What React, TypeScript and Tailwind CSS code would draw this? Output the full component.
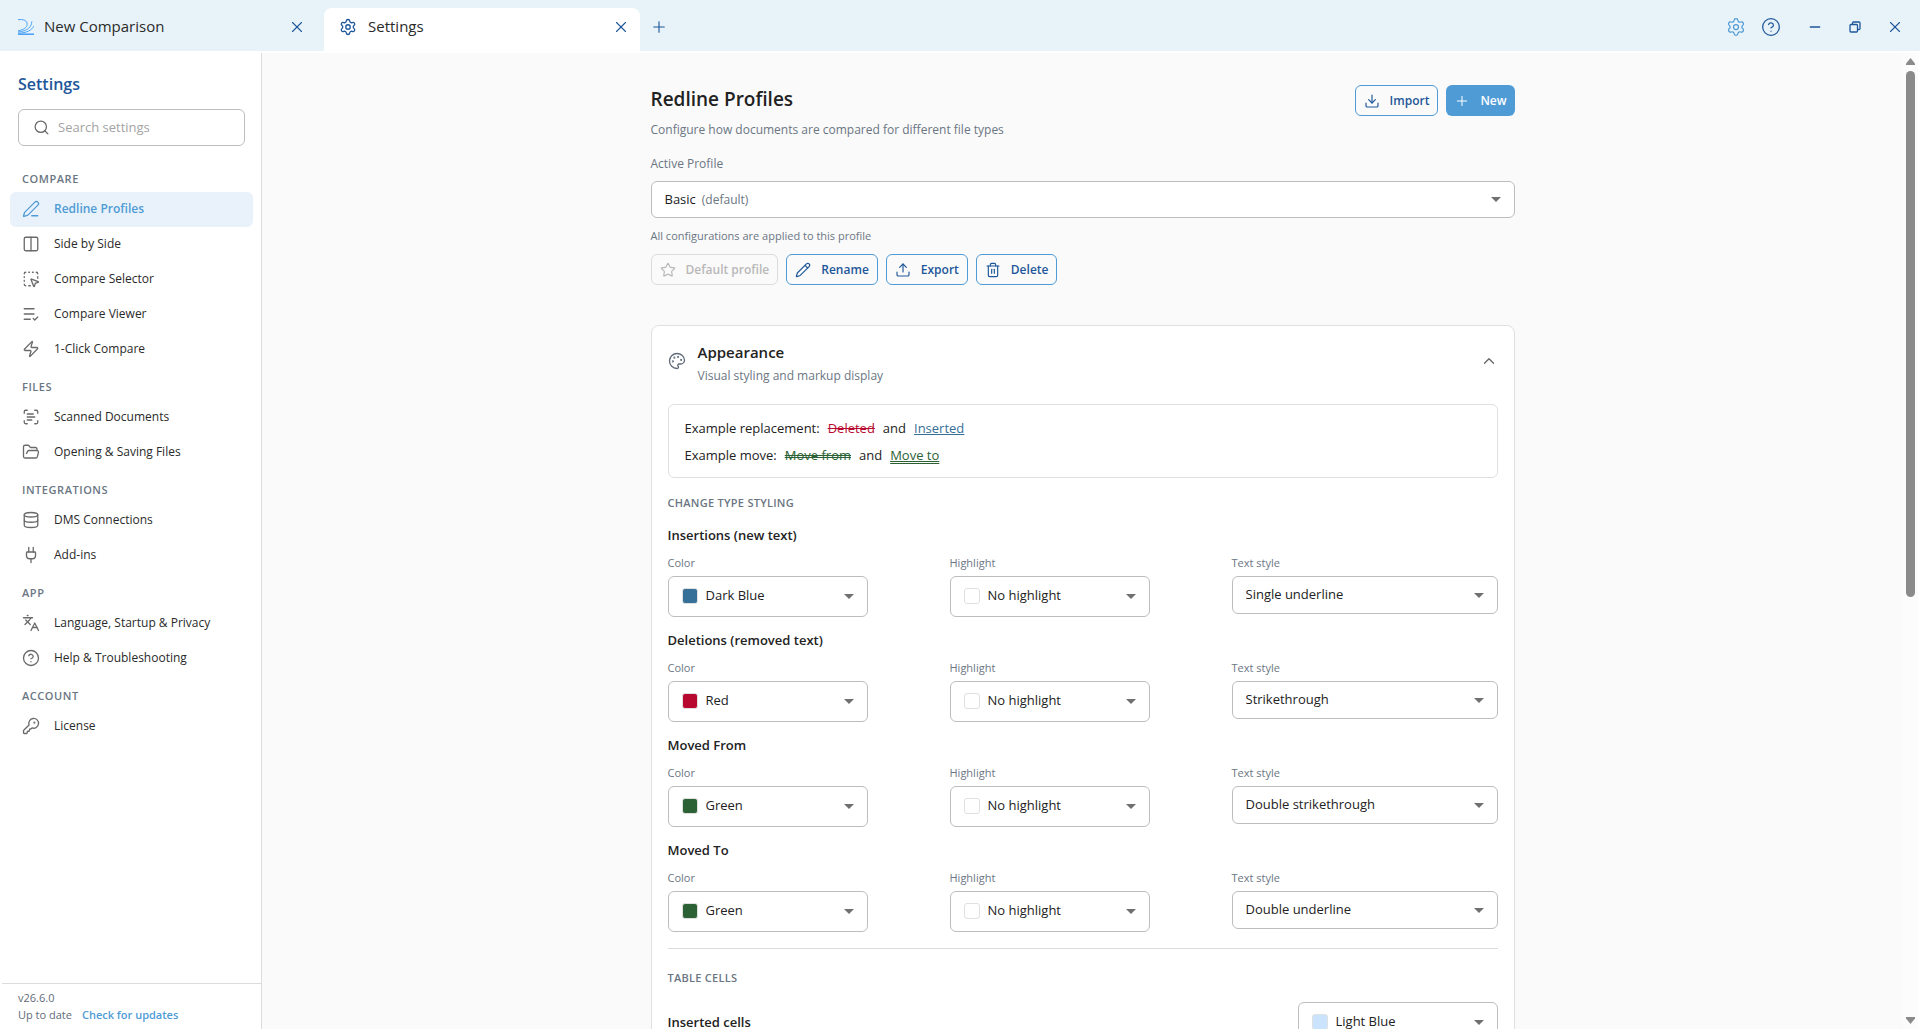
import React from 'react';
import {
  ChevronUp,
  CircleHelp,
  Columns2,
  Database,
  Download,
  FolderOpen,
  KeyRound,
  Languages,
  ListCheck,
  Minus,
  Palette,
  Pencil,
  PenLine,
  Plug,
  Plus,
  ScanText,
  Search,
  Settings,
  SquareDashedMousePointer,
  Star,
  Trash2,
  Upload,
  X,
  Zap,
  type LucideIcon,
} from 'lucide-react';

type NavItem = {
  label: string;
  icon: LucideIcon;
  active?: boolean;
};

const navGroups: { title: string; items: NavItem[] }[] = [
  {
    title: 'COMPARE',
    items: [
      { label: 'Redline Profiles', icon: PenLine, active: true },
      { label: 'Side by Side', icon: Columns2 },
      { label: 'Compare Selector', icon: SquareDashedMousePointer },
      { label: 'Compare Viewer', icon: ListCheck },
      { label: '1-Click Compare', icon: Zap },
    ],
  },
  {
    title: 'FILES',
    items: [
      { label: 'Scanned Documents', icon: ScanText },
      { label: 'Opening & Saving Files', icon: FolderOpen },
    ],
  },
  {
    title: 'INTEGRATIONS',
    items: [
      { label: 'DMS Connections', icon: Database },
      { label: 'Add-ins', icon: Plug },
    ],
  },
  {
    title: 'APP',
    items: [
      { label: 'Language, Startup & Privacy', icon: Languages },
      { label: 'Help & Troubleshooting', icon: CircleHelp },
    ],
  },
  {
    title: 'ACCOUNT',
    items: [{ label: 'License', icon: KeyRound }],
  },
];

type ChangeType = {
  id: string;
  title: string;
  color: string;
  swatch: string;
  textStyle: string;
};

const changeTypes: ChangeType[] = [
  { id: 'insertions', title: 'Insertions (new text)', color: 'Dark Blue', swatch: 'bg-[#366f98]', textStyle: 'Single underline' },
  { id: 'deletions', title: 'Deletions (removed text)', color: 'Red', swatch: 'bg-[#b8082f]', textStyle: 'Strikethrough' },
  { id: 'moved-from', title: 'Moved From', color: 'Green', swatch: 'bg-[#2c6135]', textStyle: 'Double strikethrough' },
  { id: 'moved-to', title: 'Moved To', color: 'Green', swatch: 'bg-[#2c6135]', textStyle: 'Double underline' },
];

const colors = ['Dark Blue', 'Light Blue', 'Red', 'Green'];
const highlights = ['No highlight', 'Yellow', 'Light Blue'];
const textStyles = ['Single underline', 'Double underline', 'Strikethrough', 'Double strikethrough'];

const Caret: React.FC = () => (
  <svg className="pointer-events-none h-[5px] w-[10px] shrink-0 text-[#707070]" viewBox="0 0 10 5" fill="currentColor" aria-hidden="true">
    <path d="M0 0h10L5 5z" />
  </svg>
);

const BrandMark: React.FC = () => (
  <svg className="size-4 shrink-0" viewBox="0 0 16 16" fill="none" stroke="#4da3f7" strokeWidth="1" aria-hidden="true">
    <path d="M0 .6h3.5C7 .6 9.200 2.300 9.200 5.200S6 10.800 0 11.800" />
    <path d="M13.800 2.400c0 5.200-4.300 9.800-13.800 10.600" />
    <path d="M15.600 7.200c-1.600 3.800-6.600 6.800-15.600 7" />
    <path d="M0 15.200h16" strokeWidth="1.600" />
  </svg>
);

const RestoreIcon: React.FC = () => (
  <svg className="size-3" viewBox="0 0 12 12" fill="none" stroke="currentColor" strokeWidth="1.300" aria-hidden="true">
    <rect x="1" y="3.500" width="7.500" height="7.500" rx="1" />
    <path d="M3.500 3.300V2a1 1 0 0 1 1-1H10a1 1 0 0 1 1 1v5.500a1 1 0 0 1-1 1H8.700" />
  </svg>
);

const TitleBar: React.FC = () => (
  <header className="flex h-[51px] shrink-0 items-end bg-[#e8f3f9] text-[#1e5799]">
    <div className="flex h-[43px] w-[324px] items-center pr-[18px] pb-[6px] pl-[18px]">
      <BrandMark />
      <span className="ml-[10px] flex-1 text-[15px] text-[#2a2a2a]">New Comparison</span>
      <button type="button" aria-label="Close New Comparison">
        <X className="size-[18px]" strokeWidth={1.5} />
      </button>
    </div>
    <div className="flex h-[43px] w-[316px] items-center rounded-t-lg bg-white pr-[10px] pb-[6px] pl-[15px]">
      <Settings className="size-[18px] shrink-0" strokeWidth={1.75} />
      <span className="ml-[11px] flex-1 text-[15px] text-[#2a2a2a]">Settings</span>
      <button type="button" aria-label="Close Settings">
        <X className="size-[18px]" strokeWidth={1.5} />
      </button>
    </div>
    <div className="flex h-[43px] flex-1 items-center pr-4 pb-[6px] pl-[10px]">
      <button type="button" aria-label="New tab">
        <Plus className="size-[18px]" strokeWidth={1.5} />
      </button>
      <div className="ml-auto flex items-center">
        <button type="button" aria-label="Settings" className="text-[#4f9bd5]">
          <Settings className="size-5" strokeWidth={1.5} />
        </button>
        <button type="button" aria-label="Help" className="ml-[15px]">
          <CircleHelp className="size-5" strokeWidth={1.5} />
        </button>
        <button type="button" aria-label="Minimize" className="ml-[26px]">
          <Minus className="size-4" strokeWidth={2} />
        </button>
        <button type="button" aria-label="Restore" className="ml-[26px]">
          <RestoreIcon />
        </button>
        <button type="button" aria-label="Close window" className="ml-[25px]">
          <X className="size-[18px]" strokeWidth={1.5} />
        </button>
      </div>
    </div>
  </header>
);

const Sidebar: React.FC = () => (
  <aside className="flex w-[260px] shrink-0 flex-col border-r border-[#dcdcdc] bg-white">
    <div className="px-4 pt-[19px]">
      <h2 className="text-base leading-6 font-semibold text-[#1e5799]">Settings</h2>
      <label className="mt-[13px] flex h-[37px] items-center rounded-md border border-[#bdbdbd] px-[14px]">
        <Search className="size-[17px] shrink-0 text-[#666]" strokeWidth={1.75} />
        <input
          type="search"
          aria-label="Search settings"
          placeholder="Search settings"
          className="ml-2 min-w-0 flex-1 bg-transparent text-[13px] text-[#222] placeholder-[#a3a3a3] focus:outline-none"
        />
      </label>
    </div>
    <nav className="mt-[13px] flex-1 overflow-hidden px-2">
      {navGroups.map((group) => (
        <section key={group.title}>
          <h3 className="px-3 pt-3 pb-[5px] text-[11px] leading-4 font-semibold tracking-wider text-[#6b7683]">{group.title}</h3>
          {group.items.map(({ label, icon: Icon, active }) => (
            <a
              key={label}
              href="#"
              aria-current={active ? 'page' : undefined}
              className={
                active
                  ? 'flex h-[35px] items-center gap-[14px] rounded-md bg-[#e9f2fa] px-3 pb-px text-[12px] font-semibold text-[#4f9bd5]'
                  : 'flex h-[35px] items-center gap-[14px] rounded-md px-3 pb-px text-[12px] text-[#2a2a2a]'
              }
            >
              <Icon className={active ? 'size-[18px] shrink-0' : 'size-[18px] shrink-0 text-[#6a6a6a]'} strokeWidth={1.75} />
              {label}
            </a>
          ))}
        </section>
      ))}
    </nav>
    <footer className="border-t border-[#dcdcdc] px-4 pt-[5px] pb-[6px] text-[11px] leading-[17px] text-[#5f6b7a]">
      <p>v26.6.0</p>
      <p>
        Up to date
        <a href="#" className="ml-[10px] font-semibold text-[#4f9bd5]">Check for updates</a>
      </p>
    </footer>
  </aside>
);

type ActionButtonProps = {
  icon: LucideIcon;
  label: string;
  disabled?: boolean;
};

const ActionButton: React.FC<ActionButtonProps> = ({ icon: Icon, label, disabled }) => (
  <button
    type="button"
    disabled={disabled}
    className="inline-flex h-[31px] items-center gap-[10px] rounded-md border border-[#4f9bd5] px-2 text-[12px] font-semibold text-[#1e5799] disabled:border-[#dcdcdc] disabled:text-[#b8b8b8]"
  >
    <Icon className="size-4" strokeWidth={1.75} />
    {label}
  </button>
);

type SwatchSelectProps = {
  id: string;
  value: string;
  options: string[];
  swatch: string;
};

const SwatchSelect: React.FC<SwatchSelectProps> = ({ id, value, options, swatch }) => (
  <div className="flex h-[41px] w-[200px] items-center rounded-md border border-[#bdbdbd] bg-white px-[13px]">
    <div className="flex h-full min-w-0 flex-1 items-center pb-[2px]">
      <span className={`size-4 shrink-0 rounded-[3px] border border-[#e0e0e0] ${swatch}`} />
      <select id={id} defaultValue={value} className="ml-2 h-full min-w-0 flex-1 appearance-none bg-transparent text-[13px] focus:outline-none">
        {options.map((option) => (
          <option key={option}>{option}</option>
        ))}
      </select>
    </div>
    <Caret />
  </div>
);

const ChangeTypeRow: React.FC<{ type: ChangeType }> = ({ type }) => (
  <div>
    <h4 className="text-[13px] leading-5 font-semibold">{type.title}</h4>
    <div className="mt-[10px] grid grid-cols-3 gap-4">
      <div>
        <label htmlFor={`${type.id}-color`} className="mb-[5px] block text-[11px] leading-4 text-[#6b7683]">Color</label>
        <SwatchSelect id={`${type.id}-color`} value={type.color} options={colors} swatch={type.swatch} />
      </div>
      <div>
        <label htmlFor={`${type.id}-highlight`} className="mb-[5px] block text-[11px] leading-4 text-[#6b7683]">Highlight</label>
        <SwatchSelect id={`${type.id}-highlight`} value="No highlight" options={highlights} swatch="bg-white" />
      </div>
      <div>
        <label htmlFor={`${type.id}-style`} className="mb-[5px] block text-[11px] leading-4 text-[#6b7683]">Text style</label>
        <div className="flex h-[38px] items-center rounded-md border border-[#bdbdbd] bg-white px-[13px]">
          <select id={`${type.id}-style`} defaultValue={type.textStyle} className="h-full min-w-0 flex-1 appearance-none bg-transparent text-[13px] focus:outline-none">
            {textStyles.map((style) => (
              <option key={style}>{style}</option>
            ))}
          </select>
          <Caret />
        </div>
      </div>
    </div>
  </div>
);

const ScrollTrack: React.FC = () => (
  <div className="flex w-[15px] shrink-0 flex-col items-center bg-[#fcfcfc] py-[5px] text-[#8a8a8a]" aria-hidden="true">
    <svg className="h-[7px] w-[9px]" viewBox="0 0 9 7" fill="currentColor">
      <path d="M4.500 0 9 5.500V7H0V5.500z" />
    </svg>
    <div className="my-[6px] flex w-[9px] flex-1 flex-col">
      <div className="h-[56%] rounded-full bg-current" />
    </div>
    <svg className="h-[7px] w-[9px]" viewBox="0 0 9 7" fill="currentColor">
      <path d="M4.500 7 9 1.500V0H0v1.500z" />
    </svg>
  </div>
);

export default function App() {
  return (
    <div className="flex h-screen flex-col bg-white font-['Open_Sans',sans-serif] text-[#222]">
      <TitleBar />
      <div className="flex min-h-0 flex-1 border-2 border-b-3 border-white">
        <Sidebar />
        <main className="min-w-0 flex-1 overflow-y-auto bg-[#fafafa] px-6 [scrollbar-width:none]">
          <div className="mx-auto max-w-[864px] pt-8 pb-8">
            <div className="flex items-start justify-between">
              <div>
                <h1 className="text-[19px] leading-7 font-semibold">Redline Profiles</h1>
                <p className="mt-[7px] text-[12px] leading-5 text-[#6b7683]">Configure how documents are compared for different file types</p>
              </div>
              <div className="flex gap-2">
                <ActionButton icon={Download} label="Import" />
                <button type="button" className="inline-flex h-[31px] items-center gap-[10px] rounded-md bg-[#4f9bd5] px-2 text-[12px] font-semibold text-white">
                  <Plus className="size-4" strokeWidth={1.5} />
                  New
                </button>
              </div>
            </div>

            <label htmlFor="active-profile" className="mt-4 block text-[12px] leading-4 text-[#6b7683]">Active Profile</label>
            <div className="mt-[9px] flex h-[37px] items-center rounded-md border border-[#bdbdbd] bg-white px-[13px]">
              <select id="active-profile" defaultValue="Basic" className="field-sizing-content h-full appearance-none bg-transparent text-[13px] focus:outline-none">
                <option>Basic</option>
              </select>
              <span className="ml-[6px] flex-1 text-[12px] text-[#6b7683]">(default)</span>
              <Caret />
            </div>
            <p className="mt-[10px] text-[11px] leading-4 text-[#6b7683]">All configurations are applied to this profile</p>
            <div className="mt-[10px] flex gap-2">
              <ActionButton icon={Star} label="Default profile" disabled />
              <ActionButton icon={Pencil} label="Rename" />
              <ActionButton icon={Upload} label="Export" />
              <ActionButton icon={Trash2} label="Delete" />
            </div>

            <section className="mt-10 rounded-lg border border-[#e0e0e0] bg-white px-4 pt-[15px] pb-6">
              <div className="flex items-start">
                <Palette className="mt-[11px] size-[18px] shrink-0 text-[#5f6b7a]" strokeWidth={1.75} />
                <div className="ml-3 flex-1">
                  <h2 className="text-[15px] leading-[22px] font-semibold">Appearance</h2>
                  <p className="mt-[3px] text-[12px] leading-5 text-[#6b7683]">Visual styling and markup display</p>
                </div>
                <button type="button" aria-label="Collapse Appearance" className="mt-[11px] text-[#666]">
                  <ChevronUp className="size-[18px]" strokeWidth={1.75} />
                </button>
              </div>

              <div className="mt-[18px] rounded-md border border-[#e0e0e0] px-4 pt-[10px] pb-2 text-[13px] leading-[27px]">
                <p className="flex gap-2">
                  <span>Example replacement:</span>
                  <del className="text-[#b8082f]">Deleted</del>
                  <span>and</span>
                  <ins className="text-[#366f98]">Inserted</ins>
                </p>
                <p className="flex gap-2">
                  <span>Example move:</span>
                  <del className="text-[#2c6135] decoration-double">Move from</del>
                  <span>and</span>
                  <ins className="text-[#2c6135] decoration-double">Move to</ins>
                </p>
              </div>

              <h3 className="mt-[17px] mb-[14px] text-[11px] leading-4 font-semibold tracking-wide text-[#6b7683]">CHANGE TYPE STYLING</h3>
              <div className="flex flex-col gap-[13px]">
                {changeTypes.map((type) => (
                  <ChangeTypeRow key={type.id} type={type} />
                ))}
              </div>

              <h3 className="mt-4 border-t border-[#dcdcdc] pt-[21px] text-[11px] leading-4 font-semibold tracking-wide text-[#6b7683]">TABLE CELLS</h3>
              <div className="mt-4 flex items-center justify-between">
                <label htmlFor="inserted-cells" className="text-[13px] font-semibold">Inserted cells</label>
                <SwatchSelect id="inserted-cells" value="Light Blue" options={colors} swatch="bg-[#cae4ff]" />
              </div>
            </section>
          </div>
        </main>
        <ScrollTrack />
      </div>
    </div>
  );
}
